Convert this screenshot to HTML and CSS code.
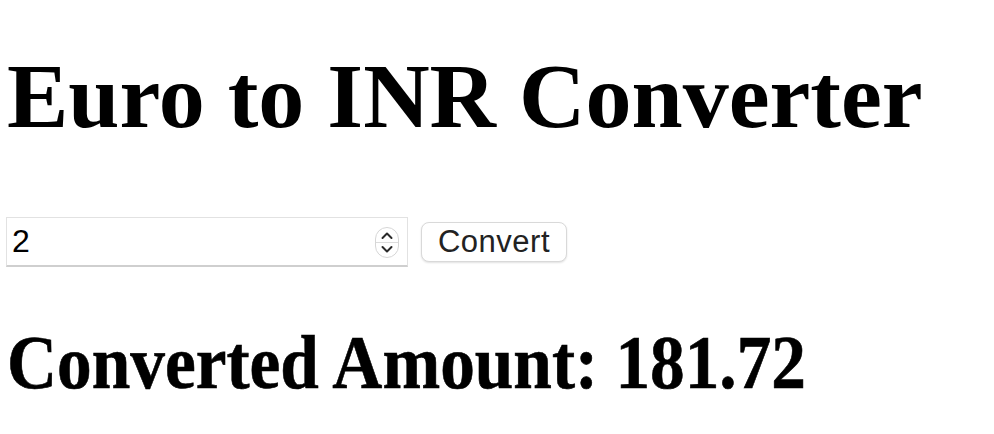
FILE: index.html
```html
<!DOCTYPE html>
<html>
<head>
<meta charset="utf-8">
<title>Euro to INR Converter</title>
<link rel="stylesheet" href="styles.css">
</head>
<body>
<h1 class="title">Euro to INR Converter</h1>
<div class="form-row">
  <div class="field">
    <input class="amount" type="text" value="2">
    <span class="spinner">
      <svg width="24" height="31" viewBox="0 0 24 31">
        <rect x="0.5" y="0.5" width="23" height="30" rx="11.5" fill="#fff" stroke="#d6d6d6"/>
        <line x1="1" y1="15.5" x2="23" y2="15.5" stroke="#dcdcdc"/>
        <path d="M7.5 11 L12 6.5 L16.5 11" fill="none" stroke="#2a2a2a" stroke-width="2" stroke-linecap="round" stroke-linejoin="round"/>
        <path d="M7.5 20 L12 24.5 L16.5 20" fill="none" stroke="#2a2a2a" stroke-width="2" stroke-linecap="round" stroke-linejoin="round"/>
      </svg>
    </span>
  </div>
  <button class="convert">Convert</button>
</div>
<h2 class="result">Converted Amount: 181.72</h2>
</body>
</html>
```
FILE: styles.css
```css
html, body {
  background: #fff;
}
body {
  margin: 0;
  padding: 0 6px;
  font-family: "Liberation Serif", "Times New Roman", serif;
  color: #000;
}
.title {
  font-size: 92px;
  font-weight: bold;
  margin: 43px 0 0 1px;
  line-height: normal;
}
.form-row {
  display: flex;
  align-items: center;
  gap: 13px;
  margin-top: 68px;
}
.field {
  position: relative;
  width: 402px;
  height: 50px;
}
.amount {
  box-sizing: border-box;
  width: 100%;
  height: 100%;
  margin: 0;
  border: 1px solid #e2e2e2;
  border-bottom: 2px solid #cfcfcf;
  padding: 0 0 0 5px;
  font-family: "Liberation Sans", Arial, sans-serif;
  font-size: 32px;
  color: #000;
  background: #fff;
  outline: none;
}
.spinner {
  position: absolute;
  left: 369px;
  top: 10px;
  width: 24px;
  height: 31px;
  display: block;
}
.spinner svg {
  display: block;
}
.convert {
  box-sizing: border-box;
  height: 40px;
  width: 146px;
  margin: 0;
  padding: 0;
  border: 1px solid #d9d9d9;
  border-radius: 8px;
  background: #fff;
  box-shadow: 0 1px 2px rgba(0,0,0,0.12);
  font-family: "Liberation Sans", Arial, sans-serif;
  font-size: 31px;
  letter-spacing: 0.5px;
  color: #222;
}
.result {
  font-size: 76px;
  font-weight: bold;
  line-height: normal;
  margin: 52px 0 0 1px;
  transform: scaleX(0.912);
  transform-origin: left center;
  white-space: nowrap;
  -webkit-text-stroke: 0.6px #000;
}
```
